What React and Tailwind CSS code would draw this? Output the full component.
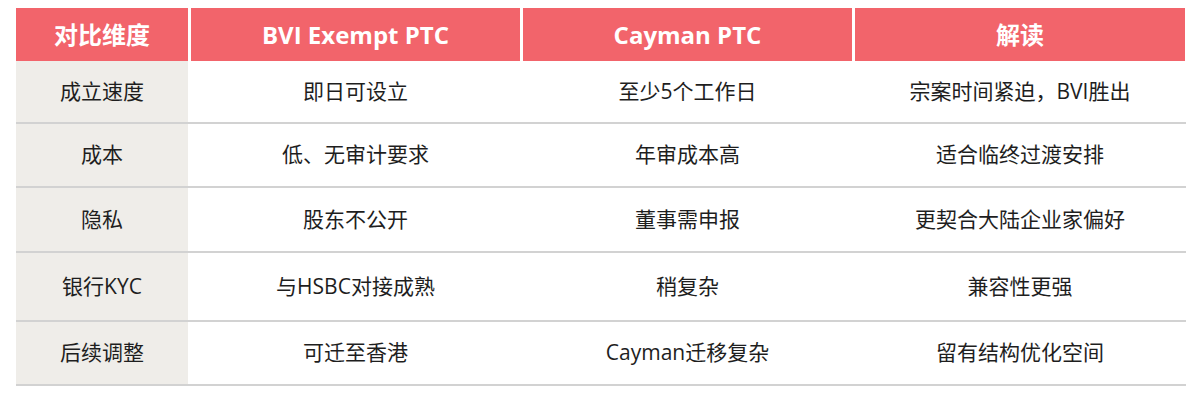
const FONT = { fontFamily: '"Open Sans", "Noto Sans CJK SC", sans-serif' };

const headers = ["对比维度", "BVI Exempt PTC", "Cayman PTC", "解读"];

const rows = [
  { h: "h-[63px]", cells: ["成立速度", "即日可设立", "至少5个工作日", "宗案时间紧迫，BVI胜出"] },
  { h: "h-[64px]", cells: ["成本", "低、无审计要求", "年审成本高", "适合临终过渡安排"] },
  { h: "h-[65px]", cells: ["隐私", "股东不公开", "董事需申报", "更契合大陆企业家偏好"] },
  { h: "h-[69px]", cells: ["银行KYC", "与HSBC对接成熟", "稍复杂", "兼容性更强"] },
  { h: "h-[64px]", cells: ["后续调整", "可迁至香港", "Cayman迁移复杂", "留有结构优化空间"] },
];

const cols = "grid grid-cols-[172px_329px_329px_330px] gap-x-[3px]";

export default function App() {
  return (
    <div className="min-h-screen bg-white pt-[8px] pl-[16px]" style={FONT}>
      <div className="w-[1170px]">
        {/* header */}
        <div className={`${cols} h-[53px]`}>
          {headers.map(t => (
            <div key={t} className="flex items-center justify-center bg-[#f2646b] text-white text-[24px] font-bold">
              {t}
            </div>
          ))}
        </div>

        {/* body */}
        {rows.map(r => (
          <div key={r.cells[0]} className={`${cols} ${r.h} border-b-2 border-[#d2d2d2]`}>
            {r.cells.map((c, i) => (
              <div key={i}
                className={`flex items-center justify-center text-[21px] text-[#1e1e1e] ${i === 0 ? "bg-[#efede9]" : "bg-white"}`}>
                {c}
              </div>
            ))}
          </div>
        ))}
      </div>
    </div>
  );
}
